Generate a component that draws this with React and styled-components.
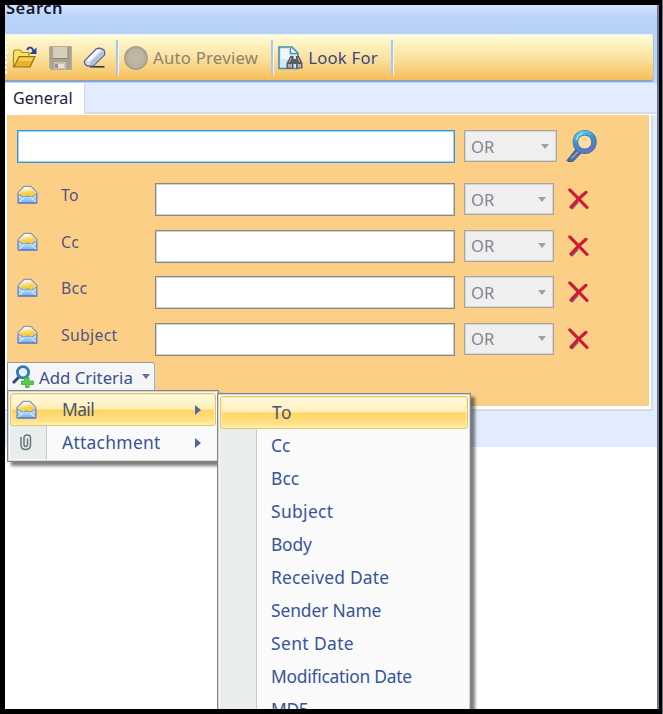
import React from 'react'
import styled, { createGlobalStyle } from 'styled-components'

const GlobalStyle = createGlobalStyle`
    * {
        box-sizing: border-box;
    }
    body {
        margin: 0;
        background: #000;
        font-family: "Noto Sans", "Open Sans", sans-serif;
        overflow: hidden;
    }
`

const Screen = styled.div`
    width: 663px;
    height: 714px;
    padding: 5px 0 5px 5px;
    background: #000;
    border-right: 1px solid #6f7478;
    overflow: hidden;
`

const Window = styled.div`
    position: relative;
    width: 654px;
    height: 704px;
    background: #fff;
    border-right: 2px solid #66789a;
    overflow: hidden;
`

const TitleBar = styled.div`
    height: 29px;
    background: linear-gradient(#d3e3fc, #b9d2fa 45%, #b7d1fa);
    overflow: hidden;
`

const Title = styled.div`
    margin-top: -8.5px;
    padding-left: 1px;
    font-size: 16.5px;
    line-height: 22px;
    font-weight: 600;
    letter-spacing: 0.5px;
    color: #101a30;
`

const ToolBarArea = styled.div`
    height: 49px;
    background: #bcd4f8;
    padding-right: 3px;
`

const ToolBar = styled.div`
    display: flex;
    align-items: center;
    height: 48px;
    border-top: 1px solid #edf2f5;
    border-bottom: 2px solid #86a6c9;
    border-right: 1px solid #a3c3e6;
    border-radius: 0 3px 4px 0;
    background: linear-gradient(#fffcd9, #fbe2a0 50%, #f7bd5a);
`

const Grip = styled.span`
    width: 2px;
    height: 34px;
    margin-right: 5px;
    background: repeating-linear-gradient(#fffdf2 0 3px, transparent 3px 5px);
`

const Divider = styled.span`
    width: 3px;
    height: 35px;
    margin: 0 ${(p) => p.$right}px 0 ${(p) => p.$left}px;
    background: linear-gradient(to right, #a5c8f3 60%, #f6f7f4 60%);
`

const ToolText = styled.span`
    margin-left: 5px;
    font-size: 16.7px;
    letter-spacing: 0.25px;
    white-space: nowrap;
    color: ${(p) => (p.$off ? '#8c8170' : '#3b4685')};
`

const Round = styled.span`
    width: 24px;
    height: 24px;
    border-radius: 50%;
    border: 2px solid #aaa28f;
    background: radial-gradient(#c2b9a6, #b5ad9a);
`

const TabRow = styled.div`
    display: flex;
    height: 32px;
    background: #e1edff;
    border-bottom: 1px solid #fff;
`

const Tab = styled.div`
    width: 80px;
    padding: 4px 0 0 8px;
    border-right: 1px solid #d5d8dc;
    background: #fff;
    font-size: 16px;
    line-height: 22px;
    letter-spacing: 0.1px;
    color: #20223c;
`

const TabFill = styled.div`
    flex: 1;
    border-bottom: 2px solid #d8dce0;
`

const PanelOuter = styled.div`
    height: 332px;
    background: #e1edff;
`

const PanelFrame = styled.div`
    height: 296px;
    margin-right: 4px;
    border-right: 2px solid #d9dde2;
    border-bottom: 2px solid #d9dadb;
    background: #fff;
    padding: 0 2px 3px 2px;
`

const Panel = styled.div`
    height: 291px;
    padding: 15px 0 0 10px;
    background: #fbd086;
`

const SearchRow = styled.div`
    display: flex;
    height: 53px;
`

const CriteriaRow = styled.div`
    display: flex;
    height: 46.5px;
`

const MailCell = styled.span`
    width: 44px;
    padding-top: 2px;
`

const Label = styled.span`
    width: 94px;
    font-size: 15.8px;
    line-height: 25px;
    letter-spacing: 0.3px;
    color: #56508a;
`

const Field = styled.input`
    display: block;
    width: ${(p) => (p.$main ? 438 : 300)}px;
    height: 33px;
    padding: 4px;
    border: 1px solid ${(p) => (p.$main ? '#2c94e4' : '#898989')};
    border-radius: 0;
    outline: none;
    background: #fff;
    box-shadow: inset 0 0 0 1px ${(p) => (p.$main ? '#a5d2f4' : '#d0d0d0')};
`

const Select = styled.div`
    display: flex;
    align-items: center;
    justify-content: space-between;
    width: ${(p) => p.$width}px;
    height: 32px;
    margin-left: 9px;
    padding: 0 7px 0 6px;
    border: 1px solid #a6a6a6;
    background: #efefef;
    box-shadow: inset 0 0 0 1px #d6d6d6;
    font-size: 16.5px;
    color: #85858c;
`

const Caret = styled.span`
    margin-right: ${(p) => p.$right || 0}px;
    border: 4.5px solid transparent;
    border-top: 5px solid ${(p) => p.$color || '#a0a0a0'};
    border-bottom: 0;
`

const IconCell = styled.span`
    margin-left: ${(p) => p.$left}px;
    padding-top: ${(p) => p.$top}px;
`

const AddButton = styled.div`
    position: absolute;
    left: 2px;
    top: 357px;
    display: flex;
    align-items: center;
    gap: 4px;
    width: 148px;
    height: 28px;
    padding: 0 4px;
    border: 1px solid #9a9a9c;
    border-right: 1px solid #8eb2e8;
    border-bottom: 0;
    border-radius: 0 3px 0 0;
    background: #f5f5f6;
    font-size: 16.8px;
    color: #38508c;
    white-space: nowrap;
`

const AddText = styled.span`
    flex: 1;
    padding-top: 1px;
`

const Menu = styled.div`
    position: absolute;
    left: ${(p) => p.$x}px;
    top: ${(p) => p.$y}px;
    width: ${(p) => p.$width}px;
    padding: 2px;
    border: 1px solid #858585;
    background: linear-gradient(to right, #fafafa 2px, #e8eeee 2px, #e8eeee 38px, #c6cccc 38px, #c6cccc 39px, #fafafa 39px) 0 4px / 100% calc(100% - 6px) no-repeat #fafafa;
    box-shadow: inset 0 0 0 1px #d5d5d5, 4px 4px 3px rgba(0, 0, 0, 0.5);
`

const MenuItem = styled.div`
    display: flex;
    align-items: center;
    height: 33px;
    padding-bottom: 2px;
    border: 1px solid ${(p) => (p.$active ? '#dec56f' : 'transparent')};
    border-radius: 3px;
    background: ${(p) => (p.$active ? 'linear-gradient(#fffbe2, #ffeeb5 48%, #ffd461 52%, #ffe28a 88%, #fff2b0)' : 'transparent')};
    box-shadow: ${(p) => (p.$active ? 'inset 0 0 0 1px #ffefa8' : 'none')};
    font-size: 17.4px;
    color: ${(p) => (p.$active ? '#465570' : '#35549a')};
`

const ItemIcon = styled.span`
    display: flex;
    width: ${(p) => p.$width || 51}px;
    padding: 2px 0 0 ${(p) => p.$left || 5}px;
`

const ItemText = styled.span`
    flex: 1;
    white-space: nowrap;
    letter-spacing: ${(p) => p.$spacing || 0}px;
`

const Arrow = styled.span`
    margin: 2px 14px 0 0;
    border: 5.5px solid transparent;
    border-left: 6px solid #5365a3;
    border-right: 0;
`

const Envelope = () => (
    <svg width="21" height="19" viewBox="0 0 21 20" preserveAspectRatio="none" style={{ display: 'block' }}>
        <defs>
            <linearGradient id="mailBlue" x1="0" y1="0" x2="0" y2="1">
                <stop offset="0" stopColor="#d9f2ff" />
                <stop offset="1" stopColor="#69b4f2" />
            </linearGradient>
            <linearGradient id="mailGold" x1="0" y1="0" x2="0.3" y2="1">
                <stop offset="0.1" stopColor="#fff" />
                <stop offset="0.7" stopColor="#f6d045" />
            </linearGradient>
        </defs>
        <path d="M1 8 L7 1.5 H14 L20 8 V19 H1 Z" fill="#e8e9ee" stroke="#8f97b8" strokeWidth="1.3" />
        <path d="M2 9 L8 2.5 H13.5 L19 9 L15 12.5 H6 Z" fill="url(#mailGold)" />
        <path d="M1.3 9.5 L7 13 L9.2 11.7 H12 L14 13 L19.6 9.5 V18.7 H1.3 Z" fill="url(#mailBlue)" stroke="#7686ba" />
        <path d="M2 18 L7.5 13 M19 18 L13.5 13" stroke="#fff" />
        <path d="M1.3 18.9 H19.8" stroke="#667dbd" strokeWidth="1.4" />
    </svg>
)

const FolderIcon = () => (
    <svg width="27" height="24" viewBox="0 0 27 24">
        <path d="M1.5 21 V6 L3 4 H8 L10 6.5 H17 V10" fill="#f8e36a" stroke="#a28b25" strokeWidth="1.2" />
        <path d="M2 21 L7 10.5 H23 L18 21 Z" fill="#e8b22b" stroke="#90701c" strokeWidth="1.2" />
        <path d="M8 12 H21 L19.5 15 H6.5 Z" fill="#f9d154" />
        <path d="M15 4 C17 0 21 1 21.5 6" fill="none" stroke="#2e479c" strokeWidth="2" />
        <path d="M17.5 8 H24.5 V1.5 Z" fill="#24419c" />
    </svg>
)

const SaveIcon = () => (
    <svg width="23" height="24" viewBox="0 0 23 24">
        <path d="M0.5 0.5 H22.5 V23.5 H2 L0.5 22 Z" fill="#aaa38f" stroke="#b6ad96" />
        <rect x="4" y="1" width="15" height="11.5" fill="#d5cebc" />
        <path d="M4 12.5 H19 V1" fill="none" stroke="#8d877b" />
        <rect x="5" y="16" width="12" height="7" fill="#c9c2b0" />
        <rect x="9" y="18" width="6" height="4" fill="#e5e0d2" />
        <rect x="6" y="18" width="3" height="4" fill="#979080" />
    </svg>
)

const EraserIcon = () => (
    <svg width="24" height="22" viewBox="0 0 24 22">
        <path d="M7 19.8 H21.5" stroke="#33405e" strokeWidth="1.7" />
        <path d="M1.5 14 L13 2 Q15 0.7 18 1.5 L21 3 Q22 5 21.5 8 L10 19 H5 Q1 18 1.5 14 Z" fill="#d4deee" stroke="#616c8e" strokeWidth="1.4" />
        <path d="M3 13.5 L14 2.8 L18 3 L6.5 14.5 Z" fill="#f6f9ff" />
        <path d="M7.5 18 L7 15 L20 3.5 L21 7.5 L10.5 18 Z" fill="#b1c2dd" />
    </svg>
)

const LookIcon = () => (
    <svg width="25" height="24" viewBox="0 0 25 24">
        <path d="M1 1 H14 L20 7 V22.5 H1 Z" fill="#cfe8f4" stroke="#4790b5" strokeWidth="1.6" />
        <path d="M3 3 H11 V13 H3 Z" fill="#eef8fb" />
        <path d="M12.5 2 V7.5 H19" fill="#fff" stroke="#4790b5" strokeWidth="1.4" />
        <path d="M12.5 10 H15.5 V13 H18 V10 H21 L24.5 17 V22.5 H18 V18 H15.5 V22.5 H8.5 V17 Z" fill="#5d5d60" />
        <path d="M10 18 H14 V21.5 H10 Z M19.5 18 H23 V21.5 H19.5 Z" fill="#aeb0b3" />
        <path d="M13 12 L11.5 16 M20 12 L21.5 16" stroke="#b8babd" />
    </svg>
)

const Magnifier = () => (
    <svg width="33" height="33" viewBox="0 0 33 33">
        <defs>
            <linearGradient id="lensRing" x1="0.2" y1="0" x2="0.6" y2="1">
                <stop offset="0" stopColor="#55c8f2" />
                <stop offset="0.5" stopColor="#438bcd" />
                <stop offset="1" stopColor="#5a78c0" />
            </linearGradient>
        </defs>
        <path d="M1 30.5 L11 18 L16 22 L7 31.5 H2 Z" fill="#4d6ca2" stroke="#415b88" />
        <path d="M5.5 28.5 L13 20.5" stroke="#87a7d1" strokeWidth="1.5" />
        <circle cx="18.7" cy="12" r="9.3" fill="#ffdea2" stroke="#3b68a8" strokeWidth="5.4" />
        <circle cx="18.7" cy="12" r="9.3" fill="none" stroke="url(#lensRing)" strokeWidth="4.2" />
        <path d="M10.6 10 A8.5 8.5 0 0 1 17 3.4" fill="none" stroke="#9be4fa" strokeWidth="1.3" />
    </svg>
)

const Cross = () => (
    <svg width="21" height="22" viewBox="0 0 21 22">
        <path d="M4 20 L9 14.5" stroke="#777176" strokeWidth="3" strokeLinecap="round" />
        <path d="M1.8 1.8 Q8 8 19 19.5 M18 4.3 Q10 11 3 19" fill="none" stroke="#ce1838" strokeWidth="3.1" strokeLinecap="round" />
    </svg>
)

const AddIcon = () => (
    <svg width="23" height="23" viewBox="0 0 23 23">
        <path d="M1 18 L7 12" stroke="#344a78" strokeWidth="3" />
        <circle cx="11" cy="7.3" r="5.6" fill="#e5f4fb" stroke="#307cae" strokeWidth="2.8" />
        <path d="M12.5 15.5 V12.5 H17 V16 H21.5 V19.5 H17 V22.5 H13.5 V19.5 H9.5 V16 H12.5 Z" fill="#5bcb50" stroke="#3fa540" strokeWidth="0.8" />
    </svg>
)

const Clip = () => (
    <svg width="12" height="17" viewBox="0 0 12 17">
        <path d="M1 3 V11 Q1 15.5 5.5 15.5 Q10.5 15.5 10.5 11 V4 Q10.5 1 7.5 1 Q4 1 4 4 V10.5 Q4 12.5 5.7 12.5 Q7.5 12.5 7.5 10.5 V4.5" fill="none" stroke="#68737b" strokeWidth="1.5" />
    </svg>
)

const criteria = ['To', 'Cc', 'Bcc', 'Subject']

const mailFields = [
    { name: 'To', spacing: 0.5 },
    { name: 'Cc', spacing: 0 },
    { name: 'Bcc', spacing: 0.1 },
    { name: 'Subject', spacing: 0.35 },
    { name: 'Body', spacing: -0.2 },
    { name: 'Received Date', spacing: 0.2 },
    { name: 'Sender Name', spacing: -0.1 },
    { name: 'Sent Date', spacing: 0.4 },
    { name: 'Modification Date', spacing: -0.25 },
    { name: 'MD5', spacing: -0.3 },
]

function OperatorSelect({ width }) {
    return (
        <Select $width={width}>
            OR
            <Caret />
        </Select>
    )
}

function Criterion({ name }) {
    return (
        <CriteriaRow>
            <MailCell><Envelope /></MailCell>
            <Label>{name}</Label>
            <Field readOnly />
            <OperatorSelect width={90} />
            <IconCell $left={14} $top={5}><Cross /></IconCell>
        </CriteriaRow>
    )
}

function App() {
    return (
        <Screen>
            <GlobalStyle />
            <Window>
                <TitleBar>
                    <Title>Search</Title>
                </TitleBar>
                <ToolBarArea>
                    <ToolBar>
                        <Grip />
                        <FolderIcon />
                        <IconCell $left={10} $top={5}><SaveIcon /></IconCell>
                        <IconCell $left={11} $top={5}><EraserIcon /></IconCell>
                        <Divider $left={9} $right={5} />
                        <Round />
                        <ToolText $off>Auto Preview</ToolText>
                        <Divider $left={13} $right={4} />
                        <LookIcon />
                        <ToolText>Look For</ToolText>
                        <Divider $left={13} $right={0} />
                    </ToolBar>
                </ToolBarArea>
                <TabRow>
                    <Tab>General</Tab>
                    <TabFill />
                </TabRow>
                <PanelOuter>
                    <PanelFrame>
                        <Panel>
                            <SearchRow>
                                <Field $main readOnly />
                                <OperatorSelect width={93} />
                                <IconCell $left={9} $top={0}><Magnifier /></IconCell>
                            </SearchRow>
                            {criteria.map((name) => <Criterion key={name} name={name} />)}
                        </Panel>
                    </PanelFrame>
                </PanelOuter>

                <Menu $x={2} $y={385} $width={212}>
                    <MenuItem $active>
                        <ItemIcon><Envelope /></ItemIcon>
                        <ItemText $spacing={-0.6}>Mail</ItemText>
                        <Arrow />
                    </MenuItem>
                    <MenuItem>
                        <ItemIcon $left={9}><Clip /></ItemIcon>
                        <ItemText $spacing={0.3}>Attachment</ItemText>
                        <Arrow />
                    </MenuItem>
                </Menu>
                <AddButton>
                    <AddIcon />
                    <AddText>Add Criteria</AddText>
                    <Caret $color="#66709c" />
                </AddButton>
                <Menu $x={212} $y={388} $width={254}>
                    {mailFields.map((field, i) => (
                        <MenuItem key={field.name} $active={i === 0}>
                            <ItemIcon $width={i === 0 ? 51 : 50} />
                            <ItemText $spacing={field.spacing}>{field.name}</ItemText>
                        </MenuItem>
                    ))}
                </Menu>
            </Window>
        </Screen>
    )
}

export default App
